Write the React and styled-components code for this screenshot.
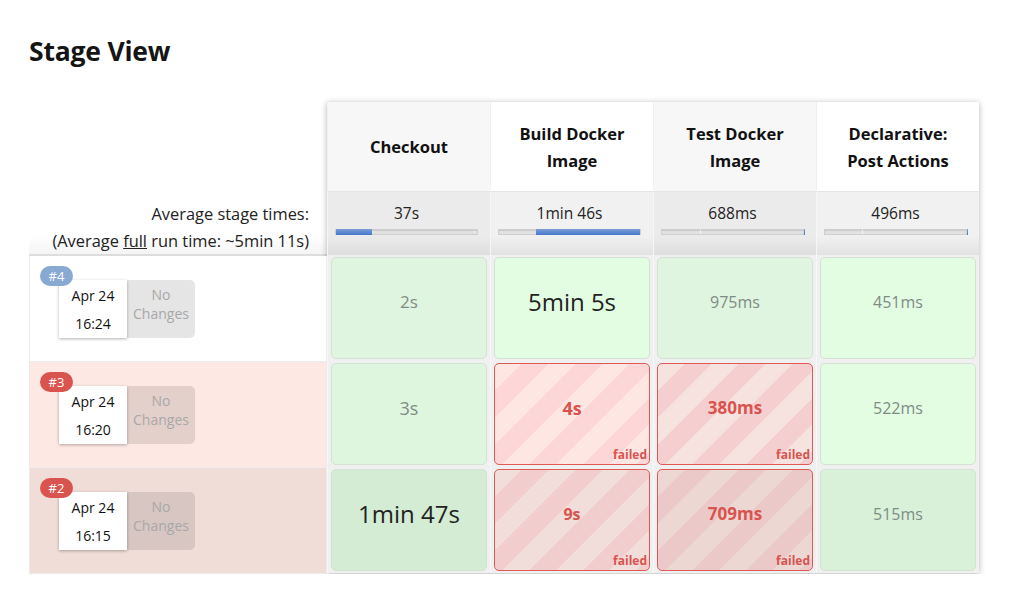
import styled, { createGlobalStyle } from "styled-components";

const Global = createGlobalStyle`
    body {
        margin: 0;
        background: #fff;
        font-family: "Open Sans", "Noto Sans", sans-serif;
        color: #222;
    }
`;

const Page = styled.div`
    padding: 31px 0 0 29px;
`;

const Title = styled.h2`
    margin: 0 0 31px;
    font-size: 26.5px;
    font-weight: 700;
    line-height: 40px;
    letter-spacing: -0.2px;
    color: #151515;
`;

const View = styled.div`
    display: flex;
    align-items: flex-start;
`;

const RunColumn = styled.div`
    width: 298px;
    display: flex;
    flex-direction: column;
    margin-top: 1px;
`;

const HeadSpacer = styled.div`
    height: 89px;
`;

const AvgLabel = styled.div`
    height: 64px;
    box-sizing: border-box;
    padding: 8px 18px 0 0;
    text-align: right;
    font-size: 16.4px;
    line-height: 27px;
    color: #222;
    background: linear-gradient(to bottom, #fff 70%, #f4f4f4);
    border-bottom: 2px solid #ddd;
    u { text-decoration: underline; }
`;

const RunRow = styled.div`
    position: relative;
    height: 106px;
    box-sizing: border-box;
    padding: 24px 0 0 29px;
    background: ${p => p.$bg};
    border: 1px solid #ececec;
    border-top: none;
`;

const Badge = styled.span`
    position: absolute;
    top: 10px;
    left: 10px;
    z-index: 2;
    min-width: 33px;
    height: 20px;
    box-sizing: border-box;
    padding: 0 6px;
    border-radius: 10px;
    background: ${p => p.$color};
    color: #fff;
    font-size: 13px;
    line-height: 20px;
    text-align: center;
`;

const RunCard = styled.div`
    display: flex;
    height: 58px;
`;

const DateBox = styled.div`
    width: 68px;
    background: #fff;
    box-shadow: 0 1px 3px rgba(0, 0, 0, 0.3);
    display: flex;
    flex-direction: column;
    justify-content: center;
    align-items: center;
    gap: 13px;
    font-size: 14px;
    line-height: 15px;
    color: #111;
`;

const Changes = styled.div`
    width: 68px;
    background: rgba(0, 0, 0, 0.1);
    border-radius: 0 5px 5px 0;
    display: flex;
    flex-direction: column;
    justify-content: center;
    align-items: center;
    font-size: 14px;
    line-height: 19px;
    color: #a8a8a8;
    padding-bottom: 10px;
    box-sizing: border-box;
`;

const StageTable = styled.div`
    display: grid;
    grid-template-columns: repeat(4, 163px);
    box-shadow: 0 1px 6px rgba(0, 0, 0, 0.3);
    background: #f0f0f0;
`;

const HeadCell = styled.div`
    height: 89px;
    display: flex;
    align-items: center;
    justify-content: center;
    text-align: center;
    padding: 0 12px;
    box-sizing: border-box;
    background: ${p => (p.$odd ? "#f7f7f7" : "#fff")};
    border-left: 1px solid #f0f0f0;
    font-size: 16.5px;
    font-weight: 700;
    line-height: 27px;
    color: #111;
`;

const AvgCell = styled.div`
    height: 64px;
    box-sizing: border-box;
    padding: 10px 0 0 7px;
    background: ${p =>
        p.$odd
            ? "linear-gradient(to bottom, #ebebeb 70%, #dedede)"
            : "linear-gradient(to bottom, #f1f1f1 70%, #e2e2e2)"};
    border-left: 1px solid #f6f6f6;
    border-top: 1px solid #e4e4e4;
`;

const AvgTime = styled.div`
    width: 143px;
    text-align: center;
    font-size: 15.5px;
    line-height: 22px;
    color: #222;
`;

const Track = styled.div`
    position: relative;
    width: 143px;
    height: 6px;
    margin-top: 5px;
    background: #e2e2e2;
    border: 1px solid #cfcfcf;
    box-sizing: border-box;
    box-shadow: inset 0 1px 1px rgba(0, 0, 0, 0.1);
`;

const Fill = styled.div`
    position: absolute;
    top: -1px;
    bottom: -1px;
    background: linear-gradient(to bottom, #7c9fd6, #4576cc);
`;

const Tick = styled.div`
    position: absolute;
    top: 0;
    bottom: 0;
    width: 1px;
    background: #f4f4f4;
`;

const StageCell = styled.div`
    height: 106px;
    padding: 2px 3px;
    box-sizing: border-box;
    border-left: 1px solid #f7f7f7;
`;

const Box = styled.div`
    position: relative;
    height: 100%;
    box-sizing: border-box;
    padding-bottom: 13px;
    border-radius: 5px;
    border: 1px solid ${p => (p.$failed ? "#e05a55" : "#d4e2d4")};
    background: ${p =>
        p.$failed
            ? `repeating-linear-gradient(135deg, ${p.$bg} 0 19px, ${p.$stripe} 19px 38px)`
            : p.$bg};
    display: flex;
    align-items: center;
    justify-content: center;
    font-size: ${p => p.$size}px;
    font-weight: ${p => (p.$failed ? 700 : 400)};
    color: ${p => (p.$failed ? "#d9534f" : p.$big ? "#222" : "#7f8c86")};
`;

const Failed = styled.span`
    position: absolute;
    right: 2px;
    bottom: 1px;
    font-size: 12px;
    font-weight: 700;
    line-height: 16px;
    color: #d9534f;
`;

const stages = [
    { name: "Checkout", avg: "37s", start: 0, width: 36 },
    { name: "Build Docker Image", avg: "1min 46s", start: 37, width: 104 },
    { name: "Test Docker Image", avg: "688ms", start: 142, width: 1, tick: 38 },
    { name: "Declarative: Post Actions", avg: "496ms", start: 142, width: 1, tick: 37 }
];

const runs = [
    {
        id: "#4", badge: "#88a9d2", bg: "#fff", time: "16:24",
        cells: [
            { t: "2s", size: 17, bg: "#dff5df" },
            { t: "5min 5s", size: 24, big: true, bg: "#e3fde3" },
            { t: "975ms", size: 16, bg: "#dff5df" },
            { t: "451ms", size: 16, bg: "#e3fde3" }
        ]
    },
    {
        id: "#3", badge: "#d9534f", bg: "#fde8e3", time: "16:20",
        cells: [
            { t: "3s", size: 18, bg: "#def6de" },
            { t: "4s", size: 18, failed: true, bg: "#fee6e3", stripe: "#fdd7d7" },
            { t: "380ms", size: 17, failed: true, bg: "#f6e2de", stripe: "#f5cfcf" },
            { t: "522ms", size: 16, bg: "#e3fde3" }
        ]
    },
    {
        id: "#2", badge: "#d9534f", bg: "#f0ddd8", time: "16:15",
        cells: [
            { t: "1min 47s", size: 24, big: true, bg: "#d3ecd3" },
            { t: "9s", size: 16, failed: true, bg: "#f1ddd9", stripe: "#f2cdcd" },
            { t: "709ms", size: 17, failed: true, bg: "#ecd7d3", stripe: "#ecc9c9" },
            { t: "515ms", size: 16, bg: "#d9f1d9" }
        ]
    }
];

export default function App() {
    return (
        <Page>
            <Global />
            <Title>Stage View</Title>
            <View>
                <RunColumn>
                    <HeadSpacer />
                    <AvgLabel>
                        Average stage times:
                        <br />
                        (Average <u>full</u> run time: ~5min 11s)
                    </AvgLabel>
                    {runs.map(r => (
                        <RunRow key={r.id} $bg={r.bg}>
                            <Badge $color={r.badge}>{r.id}</Badge>
                            <RunCard>
                                <DateBox>
                                    <span>Apr 24</span>
                                    <span>{r.time}</span>
                                </DateBox>
                                <Changes>
                                    <span>No</span>
                                    <span>Changes</span>
                                </Changes>
                            </RunCard>
                        </RunRow>
                    ))}
                </RunColumn>
                <StageTable>
                    {stages.map((s, i) => (
                        <HeadCell key={s.name} $odd={i % 2 === 0}>{s.name}</HeadCell>
                    ))}
                    {stages.map((s, i) => (
                        <AvgCell key={s.name} $odd={i % 2 === 0}>
                            <AvgTime>{s.avg}</AvgTime>
                            <Track>
                                {s.tick && <Tick style={{ left: s.tick }} />}
                                <Fill style={{ left: s.start, width: s.width }} />
                            </Track>
                        </AvgCell>
                    ))}
                    {runs.map(r =>
                        r.cells.map((c, i) => (
                            <StageCell key={r.id + i}>
                                <Box
                                    $bg={c.bg}
                                    $stripe={c.stripe}
                                    $failed={c.failed}
                                    $size={c.size}
                                    $big={c.big}
                                >
                                    {c.t}
                                    {c.failed && <Failed>failed</Failed>}
                                </Box>
                            </StageCell>
                        ))
                    )}
                </StageTable>
            </View>
        </Page>
    );
}
